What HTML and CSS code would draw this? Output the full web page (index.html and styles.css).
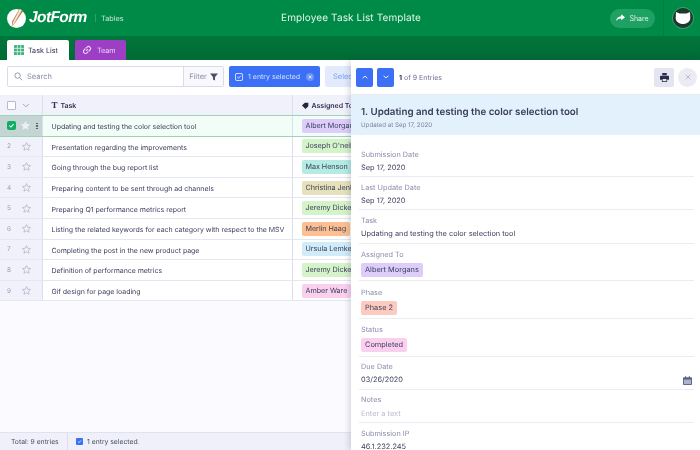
FILE: index.html
```html
<!DOCTYPE html>
<html lang="en">
<head>
<meta charset="utf-8">
<title>Employee Task List Template</title>
<link rel="stylesheet" href="styles.css">
</head>
<body>
<svg class="defs" width="0" height="0"><defs><symbol id="star" viewBox="0 0 12 12"><path d="M6 .8 7.600 4.300 11.400 4.700 8.600 7.200 9.400 11 6 9.100 2.600 11 3.400 7.200.6 4.700 4.400 4.300Z"/></symbol></defs></svg>
<div class="app">
  <header class="topbar">
    <div class="brand">
      <svg class="logo-mark" viewBox="0 0 20 20" width="19" height="19"><circle cx="10" cy="10" r="10" fill="#fff"/><path d="M13 0 17 2 9 14 5 19 5.500 13Z" fill="#c9783f"/><path d="M13.500 0 15.500 1 8 14.500 5 19 6.500 13.500Z" fill="#f0e9e0"/></svg>
      <span class="logo-text">JotForm</span>
      <span class="logo-sep"></span>
      <span class="logo-sub">Tables</span>
    </div>
    <div class="doc-title">Employee Task List Template</div>
    <div class="top-actions">
      <button class="share"><svg viewBox="0 0 12 10" width="9" height="8"><path d="M7 0l5 4-5 4V5.500C4 5.500 2 6.500 0 9c.5-3.500 3-6 7-6.500Z" fill="#fff"/></svg>Share</button>
      <span class="avatar-wrap"><span class="avatar"><svg viewBox="0 0 20 20" width="20" height="20"><circle cx="10" cy="10" r="10" fill="#1d3b2b"/><path d="M3 4 6.500 5.500h7L17 4l.3 6c0 3.500-3.300 6-7.300 6s-7.300-2.500-7.300-6Z" fill="#fff"/></svg></span></span>
    </div>
  </header>
  <nav class="tabs">
    <div class="tab tab-active"><svg viewBox="0 0 12 12" width="10" height="10"><rect width="12" height="12" rx="1" fill="#3fb27f"/><path d="M4 0v12M8 0v12M0 4h12M0 8h12" stroke="#fff" stroke-width=".8"/></svg>Task List</div>
    <div class="tab tab-team"><svg viewBox="0 0 12 12" width="10" height="10"><path d="M5 7l2-2M4.500 4 6 2.500a2 2 0 0 1 3.500 3.500L8 7.500M7.500 8 6 9.500A2 2 0 0 1 2.500 6L4 4.500" fill="none" stroke="#f0d8f5" stroke-width="1.300"/></svg>Team</div>
  </nav>
  <section class="toolbar">
    <div class="search">
      <div class="search-input"><svg viewBox="0 0 10 10" width="9" height="9"><circle cx="4" cy="4" r="3" fill="none" stroke="#8a8fa8" stroke-width="1"/><path d="M6.300 6.300 9.200 9.200" stroke="#8a8fa8" stroke-width="1"/></svg>Search</div>
      <div class="filter">Filter<svg viewBox="0 0 10 10" width="8" height="8"><path d="M0 .5h10L6.300 5v4.500L3.700 8V5Z" fill="#4a4d68"/></svg></div>
    </div>
    <div class="selected"><svg viewBox="0 0 10 10" width="8" height="8"><rect x=".5" y=".5" width="9" height="9" rx="2" fill="none" stroke="#fff"/><path d="M2.800 5 4.500 6.600 7.300 3.400" fill="none" stroke="#fff"/></svg>1 entry selected<span class="x-dot">×</span></div>
    <div class="select-btn">Select All</div>
  </section>
  <section class="grid">
    <div class="row head">
      <div class="c-ctl"><span class="box"></span><svg viewBox="0 0 10 6" width="8" height="5"><path d="M1 1l4 3.500L9 1" fill="none" stroke="#9a9db5"/></svg></div>
      <div class="c-task"><b class="t-ic">T</b>Task</div>
      <div class="c-who"><svg viewBox="0 0 10 10" width="7" height="7"><path d="M0 5 4 1h5v5L5 10Z" fill="#23263f"/></svg>Assigned To</div>
    </div>
    <div class="row row-sel">
      <div class="c-ctl ctl-sel"><span class="check"><svg viewBox="0 0 10 10" width="7" height="7"><path d="M2 5.200 4.200 7.200 8 3" fill="none" stroke="#fff" stroke-width="1.500"/></svg></span><svg class="star star-w"><use href="#star"/></svg><span class="dots"><i></i><i></i><i></i></span></div>
      <div class="c-task">Updating and testing the color selection tool</div>
      <div class="c-who"><span class="pill purple">Albert Morgans</span></div>
    </div>
    <div class="row"><div class="c-ctl"><span class="num">2</span><svg class="star"><use href="#star"/></svg></div><div class="c-task">Presentation regarding the improvements</div><div class="c-who"><span class="pill green">Joseph O'neil</span></div></div>
    <div class="row"><div class="c-ctl"><span class="num">3</span><svg class="star"><use href="#star"/></svg></div><div class="c-task">Going through the bug report list</div><div class="c-who"><span class="pill teal">Max Henson</span></div></div>
    <div class="row"><div class="c-ctl"><span class="num">4</span><svg class="star"><use href="#star"/></svg></div><div class="c-task">Preparing content to be sent through ad channels</div><div class="c-who"><span class="pill khaki">Christina Jenkins</span></div></div>
    <div class="row"><div class="c-ctl"><span class="num">5</span><svg class="star"><use href="#star"/></svg></div><div class="c-task">Preparing Q1 performance metrics report</div><div class="c-who"><span class="pill green">Jeremy Dickens</span></div></div>
    <div class="row"><div class="c-ctl"><span class="num">6</span><svg class="star"><use href="#star"/></svg></div><div class="c-task">Listing the related keywords for each category with respect to the MSV</div><div class="c-who"><span class="pill orange">Merlin Haag</span></div></div>
    <div class="row"><div class="c-ctl"><span class="num">7</span><svg class="star"><use href="#star"/></svg></div><div class="c-task">Completing the post in the new product page</div><div class="c-who"><span class="pill sky">Ursula Lemke</span></div></div>
    <div class="row"><div class="c-ctl"><span class="num">8</span><svg class="star"><use href="#star"/></svg></div><div class="c-task">Definition of performance metrics</div><div class="c-who"><span class="pill green">Jeremy Dickens</span></div></div>
    <div class="row"><div class="c-ctl"><span class="num">9</span><svg class="star"><use href="#star"/></svg></div><div class="c-task">Gif design for page loading</div><div class="c-who"><span class="pill pink">Amber Ware</span></div></div>
  </section>
  <footer class="statusbar">
    <div class="total">Total: 9 entries</div>
    <div class="status-sel"><span class="mini"><svg viewBox="0 0 10 10" width="5" height="5"><path d="M2 5.200 4.200 7.200 8 3" fill="none" stroke="#fff" stroke-width="1.600"/></svg></span>1 entry selected.</div>
  </footer>
  <aside class="panel">
    <div class="panel-top">
      <button class="nav"><svg viewBox="0 0 10 6" width="6" height="4"><path d="M1 5l4-3.500L9 5" fill="none" stroke="#fff" stroke-width="1.500"/></svg></button>
      <button class="nav"><svg viewBox="0 0 10 6" width="6" height="4"><path d="M1 1l4 3.500L9 1" fill="none" stroke="#fff" stroke-width="1.500"/></svg></button>
      <span class="count"><b>1</b> of 9 Entries</span>
      <button class="print"><svg viewBox="0 0 12 12" width="9" height="9"><path d="M3 0h6v3H3ZM1 3.500h10a1 1 0 0 1 1 1V9H9.500v3h-7V9H0V4.500a1 1 0 0 1 1-1Z" fill="#2b2e4a"/><path d="M3.500 8h5v3h-5Z" fill="#e4e5f1"/></svg></button>
      <button class="close"><svg viewBox="0 0 10 10" width="6" height="6"><path d="M1 1l8 8M9 1l-8 8" stroke="#a3a6bd" stroke-width="1.100"/></svg></button>
    </div>
    <div class="panel-title">
      <h1>1. Updating and testing the color selection tool</h1>
      <p>Updated at Sep 17, 2020</p>
    </div>
    <div class="field f-first"><label>Submission Date</label><div class="val">Sep 17, 2020</div></div>
    <div class="field"><label>Last Update Date</label><div class="val">Sep 17, 2020</div></div>
    <div class="field"><label>Task</label><div class="val">Updating and testing the color selection tool</div></div>
    <div class="field f-pill"><label>Assigned To</label><span class="tag purple">Albert Morgans</span></div>
    <div class="field f-pill"><label>Phase</label><span class="tag salmon">Phase 2</span></div>
    <div class="field f-pill"><label>Status</label><span class="tag pink">Completed</span></div>
    <div class="field"><label>Due Date</label><div class="val val-date">03/26/2020<svg viewBox="0 0 10 10" width="9" height="9"><path d="M1 1.500h8a1 1 0 0 1 1 1V9a1 1 0 0 1-1 1H1a1 1 0 0 1-1-1V2.500a1 1 0 0 1 1-1ZM2.500 0h1v2h-1ZM6.500 0h1v2h-1Z" fill="#5d6285"/><path d="M1 4h8v5H1Z" fill="#aeb1cc"/></svg></div></div>
    <div class="field"><label>Notes</label><div class="val placeholder">Enter a text</div></div>
    <div class="field f-last"><label>Submission IP</label><div class="val">46.1.232.245</div></div>
  </aside>
</div>
</body>
</html>
```
FILE: styles.css
```css
* { box-sizing: border-box; }
html, body { margin: 0; padding: 0; }
body { font-family: "Inter", "Noto Sans", sans-serif; color: #2f3250; text-rendering: geometricPrecision; }
button { border: 0; padding: 0; font: inherit; }
.defs { position: absolute; }
.app { position: relative; width: 700px; height: 450px; overflow: hidden; display: flex; flex-direction: column; background: #fbfbff; filter: blur(.3px); }

.topbar { height: 36px; flex: none; background: #008a48; display: flex; align-items: center; padding: 0 6px 0 7px; position: relative; }
.brand { display: flex; align-items: center; color: #fff; }
.logo-text { font: italic 700 15.500px "Liberation Sans", sans-serif; letter-spacing: -.6px; margin-left: 3px; width: 66px; }
.logo-sep { width: 1px; height: 8px; background: #2aa368; margin-right: 5px; }
.logo-sub { font-size: 7.300px; color: #c9e8d6; }
.doc-title { position: absolute; left: 281px; top: 11px; font-size: 10px; line-height: 14px; color: #e3f5ea; letter-spacing: .12px; }
.top-actions { margin-left: auto; display: flex; align-items: center; align-self: stretch; }
.share { width: 45px; height: 19px; border-radius: 10px; background: #20a164; color: #d9f2e3; font-size: 7px; display: flex; align-items: center; justify-content: center; gap: 4px; margin-right: 8px; }
.avatar-wrap { align-self: stretch; display: flex; align-items: center; border-left: 1px solid #008040; padding-left: 8px; }
.avatar { width: 22px; height: 22px; border-radius: 50%; border: 1px solid #4c9d72; display: flex; }

.tabs { height: 24px; flex: none; background: linear-gradient(#00753c, #006b35); display: flex; align-items: flex-end; gap: 6px; padding-left: 7px; }
.tab { height: 20px; border-radius: 2px 2px 0 0; display: flex; align-items: center; font-size: 7.200px; }
.tab-active { width: 62px; background: #fff; padding-left: 7px; gap: 4px; }
.tab-team { width: 51px; background: #9c3fc4; color: #ecd4f5; padding-left: 7px; gap: 5px; }

.toolbar { height: 35px; flex: none; background: #fff; display: flex; align-items: center; gap: 5px; padding: 0 0 2px 7px; }
.search { width: 217px; height: 21px; border: 1px solid #d9dbe8; border-radius: 2px; display: flex; }
.search-input { flex: 1; display: flex; align-items: center; gap: 4px; padding-left: 6px; font-size: 7.500px; color: #8a8fa8; }
.filter { width: 40px; border-left: 1px solid #d9dbe8; background: #f8f8fd; display: flex; align-items: center; justify-content: center; gap: 3px; font-size: 7.500px; color: #8a8fa8; }
.selected { width: 91px; height: 21px; border-radius: 2px; background: #3b6ff5; color: #d4e0fd; display: flex; align-items: center; padding-left: 6px; gap: 5px; font-size: 7px; white-space: nowrap; }
.x-dot { width: 8px; height: 8px; border-radius: 50%; background: #6d93f7; color: #fff; font-size: 7px; line-height: 8px; text-align: center; margin-left: 1px; }
.select-btn { height: 21px; background: #e2eafc; color: #7ba0f5; font-size: 7.500px; padding: 0 8px; display: flex; align-items: center; border-radius: 2px; }

.grid { flex: none; display: flex; flex-direction: column; }
.row { height: 20.600px; display: grid; grid-template-columns: 43px 250px 1fr; background: #fff; border-bottom: 1px solid #e5e6f1; font-size: 7px; letter-spacing: -.03px; }
.row > div { display: flex; align-items: center; white-space: nowrap; overflow: hidden; }
.c-ctl { background: #f1f1fb; border-right: 1px solid #dcdeec; padding-left: 7px; color: #9a9db5; }
.c-task { border-right: 1px solid #dcdeec; padding: 2px 0 0 8.500px; color: #3f4260; }
.c-who { padding-left: 8.500px; }
.head { height: 21px; background: #f1f1fb; border-bottom: 1px solid #9ed4b6; font-weight: 600; color: #2f3250; }
.head > div { background: #f1f1fb; color: #2f3250; padding-top: 0; }
.head .c-ctl { gap: 6px; }
.head .c-who { gap: 3px; }
.box { width: 9px; height: 9px; background: #fff; border: 1px solid #b6b9cf; border-radius: 1px; }
.t-ic { font: 700 9px "Liberation Serif", serif; margin-right: 3px; }
.row-sel { border-bottom: 1px solid #9ed4b6; background: #f1fdf6; }
.ctl-sel { background: #c4d5d3 !important; }
.check { width: 9px; height: 9px; border-radius: 2px; background: #0fae62; display: flex; align-items: center; justify-content: center; flex: none; }
.num { width: 10px; font-size: 6.500px; }
.star { width: 9px; height: 9px; margin-left: 5px; flex: none; fill: none; stroke: #a9acc5; stroke-width: .9; }
.star-w { fill: #eef0f7; stroke: #eef0f7; }
.dots { margin-left: 6px; display: flex; flex-direction: column; gap: 1px; }
.dots i { width: 1.500px; height: 1.500px; border-radius: 50%; background: #4a4d68; }
.pill { height: 14px; line-height: 14px; padding: 0 4px; border-radius: 2px; color: #3c3f5c; min-width: 48px; font-size: 7.200px; }
.purple { background: #dccdfb; }
.green { background: #d4f3c8; }
.teal { background: #b4ece3; }
.khaki { background: #e6e1bb; }
.orange { background: #fdbf90; }
.sky { background: #cfecf8; }
.pink { background: #fbd0ef; }
.salmon { background: #fdcabf; }

.statusbar { position: absolute; left: 0; right: 0; bottom: 0; height: 18px; background: #eff0fa; border-top: 1px solid #e0e2ef; display: flex; font-size: 6.800px; color: #4a4d68; }
.total { width: 68px; padding-left: 11px; border-right: 1px solid #dcdeec; display: flex; align-items: center; white-space: nowrap; }
.status-sel { padding-left: 8px; display: flex; align-items: center; gap: 4px; }
.mini { width: 7px; height: 7px; background: #3b6ff5; border-radius: 1px; display: flex; align-items: center; justify-content: center; }

.panel { position: absolute; left: 351px; top: 60px; width: 349px; height: 390px; background: #fff; box-shadow: -2px 0 6px rgba(40,45,80,.18); overflow: hidden; }
.panel-top { height: 35px; display: flex; align-items: center; padding: 0 3px 0 5px; gap: 4px; border-bottom: 1px solid #e8e9f3; }
.nav { width: 17px; height: 19px; background: #3b6ff5; border-radius: 2px; display: flex; align-items: center; justify-content: center; }
.count { margin-left: 1px; font-size: 7px; color: #6d7090; }
.count b { color: #2f3250; }
.print { margin-left: auto; width: 20px; height: 19px; background: #e4e5f1; border-radius: 2px; display: flex; align-items: center; justify-content: center; }
.close { width: 19px; height: 19px; border-radius: 50%; background: #ebebf3; display: flex; align-items: center; justify-content: center; }
.panel-title { height: 40px; background: #e3f1fc; padding: 12px 10px 0; }
.panel-title h1 { margin: 0; font-size: 9.750px; line-height: 12px; font-weight: 600; color: #3a3d58; white-space: nowrap; }
.panel-title p { margin: 2px 0 0; font-size: 6.200px; line-height: 9px; color: #7d8099; }
.field { margin: 0 6px 0 8px; padding: 5.500px 2px 0; height: 33.300px; border-bottom: 1.500px solid #eaebf3; }
.f-first { height: 42px; padding-top: 14.500px; }
.f-last { border-bottom: 0; }
.field label { display: block; font-size: 7.300px; line-height: 10px; color: #8d8dab; }
.val { font-size: 7.400px; line-height: 10px; margin-top: 3.300px; color: #3c3f5c; display: flex; justify-content: space-between; align-items: center; }
.f-pill { height: 37.700px; padding-top: 6.500px; }
.tag { display: block; width: fit-content; height: 14px; line-height: 14px; font-size: 7.400px; padding: 0 4px; border-radius: 2px; margin-top: 3px; color: #3c3f5c; }
.placeholder { color: #b8bace; }
```
